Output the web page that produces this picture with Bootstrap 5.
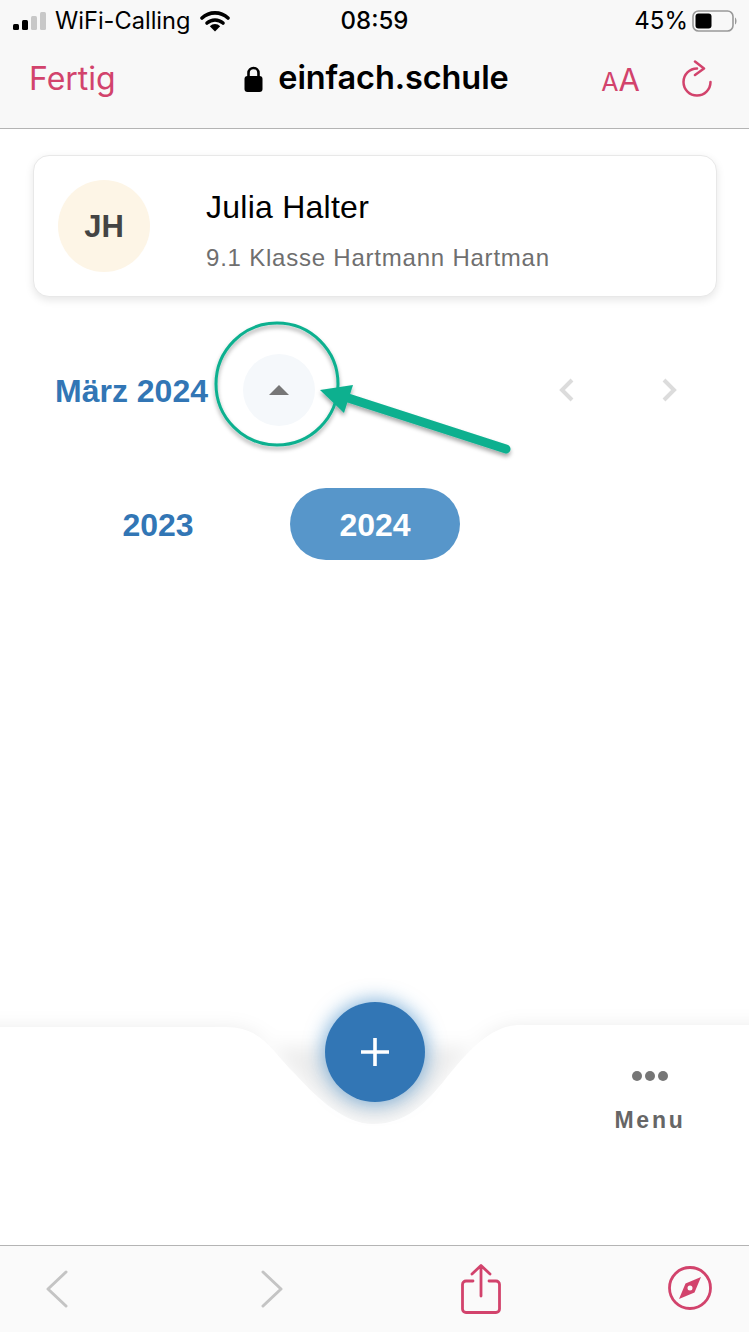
<!DOCTYPE html>
<html lang="de">
  <head>
    <meta charset="UTF-8" />
    <meta name="viewport" content="width=device-width, initial-scale=1.0" />
    <title>einfach.schule</title>
    <link href="https://cdn.jsdelivr.net/npm/bootstrap@5.3.0/dist/css/bootstrap.min.css" rel="stylesheet" />
    <style>
      html, body { height: 100%; }
      body { width: 749px; height: 1332px; overflow: hidden; background: #fff; font-family: "Liberation Sans", Arial, sans-serif; color: #000; }
      .app-shell { height: 1332px; position: relative; }
      .ios-font { font-family: Inter, "Liberation Sans", sans-serif; }
      .top-bar { height: 129px; background: #f8f8f8; border-bottom: 1px solid #b4b4b4; flex: none; }
      .status-row { height: 41px; padding: 1px 11px 0 13px; font-size: 23.6px; line-height: 1; position: relative; }
      .status-time { position: absolute; left: 0; right: 0; top: 9px; text-align: center; font-size: 24px; font-weight: 500; }
      .battery-text { font-size: 24px; }
      .wifi-mark { flex: none; margin-left: 9px; }
      .url-row { height: 87px; padding: 0 37px 12px 29px; display: grid; grid-template-columns: 1fr auto 1fr; align-items: center; }
      .done-link { color: #d2436c; font-size: 32px; text-decoration: none; }
      .site-box { margin-left: 12px; }
      .site-name { font-size: 32.5px; font-weight: 600; letter-spacing: -.1px; }
      .lock-mark { flex: none; margin-right: 15px; }
      .aa-small { color: #d2436c; font-size: 25px; line-height: 1; margin-top: 7px; }
      .aa-big { color: #d2436c; font-size: 31px; line-height: 1; margin-top: 1px; margin-right: 42px; }
      .main-area { flex: 1 1 auto; padding: 26px 32px 0 33px; }
      .person-card { height: 142px; border: 1px solid #e8e8e8; border-radius: 16px; padding: 0 24px; box-shadow: 0 3px 8px rgba(0, 0, 0, .1); }
      .avatar-ball { width: 92px; height: 92px; border-radius: 50%; background: #fdf5e6; color: #444; font-size: 31px; font-weight: 700; margin-right: 56px; padding-top: 3px; }
      .person-text { padding-top: 9px; }
      .person-name { font-size: 32px; line-height: 36px; letter-spacing: .25px; margin-bottom: 19px; }
      .person-class { font-size: 24px; line-height: 28px; letter-spacing: .78px; color: #6f6f6f; }
      .month-row { height: 72px; margin-top: 57px; padding-left: 22px; }
      .month-title { font-size: 32px; font-weight: 700; color: #3276b5; margin-right: 35px; padding-top: 2px; }
      .round-toggle { width: 72px; height: 72px; border-radius: 50%; border: 0; padding: 0; background: #f5f8fb; }
      .pager-box { margin-left: auto; width: 120px; margin-right: 39px; }
      .year-row { margin-top: 62px; padding-left: 40px; gap: 47px; }
      .year-pill { width: 170px; height: 72px; border-radius: 36px; border: 0; background: transparent; font-size: 32px; font-weight: 700; color: #3276b5; padding: 2px 0 0; }
      .year-pill.is-active { background: #5796ca; color: #fff; }
      .note-layer { position: absolute; left: 0; top: 0; pointer-events: none; }
      .tab-area { height: 245px; position: relative; flex: none; }
      .tab-curve { position: absolute; left: 0; top: 0; }
      .fab-btn { position: absolute; left: 325px; top: 2px; width: 100px; height: 100px; border-radius: 50%; border: 0; padding: 0; background: #3276b5; box-shadow: 0 0 18px 3px rgba(50, 130, 195, .55); }
      .menu-item { position: absolute; left: 600px; width: 100px; top: 71px; text-align: center; color: #666; font-size: 23px; font-weight: 700; letter-spacing: 2.8px; }
      .dot-row { gap: 3px; height: 10px; margin-bottom: 22px; }
      .dot-row span { width: 10px; height: 10px; border-radius: 50%; background: #767676; }
      .bottom-bar { height: 87px; flex: none; background: #fafafa; border-top: 1px solid #b4b4b4; position: relative; }
      .bottom-icons { height: 86px; padding: 0 37px 0 46px; }
      .fwd-icon { margin-left: 193px; }
      .share-icon { margin-left: 178px; }
      .compass-icon { margin-left: auto; margin-top: -2px; }
    </style>
  </head>
  <body>
    <div class="app-shell d-flex flex-column">
      <header class="top-bar">
        <div class="status-row d-flex align-items-center ios-font">
          <svg width="34" height="18" viewBox="0 0 34 18" class="me-2 flex-shrink-0">
            <rect x="0" y="12" width="6" height="6" rx="1.5" fill="#000" />
            <rect x="9" y="8" width="6" height="10" rx="1.5" fill="#000" />
            <rect x="18" y="4" width="6" height="14" rx="1.5" fill="#c8c8c8" />
            <rect x="27" y="0" width="6" height="18" rx="1.5" fill="#c8c8c8" />
          </svg>
          <span>WiFi-Calling</span>
          <svg width="30" height="22" viewBox="0 0 30 22" class="wifi-mark">
            <path d="M2 8 A19 19 0 0 1 28 8" fill="none" stroke="#000" stroke-width="3.6" stroke-linecap="round" />
            <path d="M7 13 A12 12 0 0 1 23 13" fill="none" stroke="#000" stroke-width="3.6" stroke-linecap="round" />
            <path d="M15 21.5 L9.8 16.2 A7.5 7.5 0 0 1 20.2 16.2 Z" fill="#000" />
          </svg>
          <span class="status-time">08:59</span>
          <span class="battery-text ms-auto me-1">45%</span>
          <svg width="46" height="22" viewBox="0 0 46 22" class="flex-shrink-0">
            <rect x="1" y="1" width="40" height="20" rx="5.5" fill="none" stroke="#999" stroke-width="1.6" />
            <rect x="3.5" y="3.5" width="16" height="15" rx="3" fill="#000" />
            <path d="M43 7.5 C45 8.5 45 13.5 43 14.5 Z" fill="#999" />
          </svg>
        </div>
        <div class="url-row ios-font">
          <a href="#" class="done-link">Fertig</a>
          <div class="site-box d-flex align-items-center">
            <svg width="19" height="26" viewBox="0 0 19 26" class="lock-mark">
              <path d="M4.5 11 V7 A5 5 0 0 1 14.5 7 V11" fill="none" stroke="#000" stroke-width="2.6" />
              <rect x="0.5" y="10" width="18" height="16" rx="3" fill="#000" />
            </svg>
            <span class="site-name">einfach.schule</span>
          </div>
          <div class="d-flex align-items-center justify-content-end">
            <span class="aa-small">A</span><span class="aa-big">A</span>
            <svg width="30" height="37" viewBox="0 0 30 37" fill="none" stroke="#d2436c" stroke-width="2.5" stroke-linecap="round" stroke-linejoin="round" class="flex-shrink-0">
              <path d="M15 8.5 A13.5 13.5 0 1 0 28.5 22" />
              <path d="M13 1.5 L22 8.5 L13 15" />
            </svg>
          </div>
        </div>
      </header>

      <main class="main-area">
        <div class="card person-card flex-row align-items-center">
          <div class="avatar-ball d-flex align-items-center justify-content-center flex-shrink-0">JH</div>
          <div class="person-text">
            <div class="person-name">Julia Halter</div>
            <div class="person-class">9.1 Klasse Hartmann Hartman</div>
          </div>
        </div>

        <div class="month-row d-flex align-items-center">
          <span class="month-title">März 2024</span>
          <button class="round-toggle d-flex align-items-center justify-content-center" aria-label="Jahr wählen">
            <svg width="20" height="10" viewBox="0 0 20 10"><path d="M10 0 L20 10 H0 Z" fill="#777" /></svg>
          </button>
          <div class="pager-box d-flex justify-content-between">
            <svg width="16" height="24" viewBox="0 0 16 24" fill="none" stroke="#dcdcdc" stroke-width="4"><path d="M14 2 L4 12 L14 22" /></svg>
            <svg width="16" height="24" viewBox="0 0 16 24" fill="none" stroke="#dcdcdc" stroke-width="4"><path d="M2 2 L12 12 L2 22" /></svg>
          </div>
        </div>

        <div class="year-row d-flex">
          <button class="year-pill">2023</button>
          <button class="year-pill is-active">2024</button>
        </div>
      </main>

      <section class="tab-area">
        <svg class="tab-curve" width="749" height="245" viewBox="0 0 749 245">
          <defs>
            <filter id="curveShade" x="-5%" y="-30%" width="110%" height="160%">
              <feGaussianBlur stdDeviation="9" />
            </filter>
          </defs>
          <path d="M-20 27 H225 C262 27 270 49 296 75 C318 99 345 124 373 124 C405 124 425 105 447 77 C470 49 492 25 520 25 H769 V47 H-20 Z" fill="#000" fill-opacity=".07" filter="url(#curveShade)" />
          <path d="M-20 27 H225 C262 27 270 49 296 75 C318 99 345 124 373 124 C405 124 425 105 447 77 C470 49 492 25 520 25 H769 V245 H-20 Z" fill="#fff" />
        </svg>
        <button class="fab-btn d-flex align-items-center justify-content-center" aria-label="Neu">
          <svg width="28" height="28" viewBox="0 0 28 28"><path d="M14 0 V28 M0 14 H28" stroke="#fff" stroke-width="3.6" /></svg>
        </button>
        <div class="menu-item">
          <div class="dot-row d-flex justify-content-center"><span></span><span></span><span></span></div>
          Menu
        </div>
      </section>

      <footer class="bottom-bar">
        <div class="bottom-icons d-flex align-items-center">
          <svg width="22" height="38" viewBox="0 0 22 38" fill="none" stroke="#c4c4c4" stroke-width="3" stroke-linecap="round" stroke-linejoin="round"><path d="M20 2 L2 19 L20 36" /></svg>
          <svg width="22" height="38" viewBox="0 0 22 38" fill="none" stroke="#c4c4c4" stroke-width="3" stroke-linecap="round" stroke-linejoin="round" class="fwd-icon"><path d="M2 2 L20 19 L2 36" /></svg>
          <svg width="40" height="50" viewBox="0 0 40 50" fill="none" stroke="#d2436c" stroke-width="2.8" stroke-linecap="round" stroke-linejoin="round" class="share-icon"><path d="M20 32 V2 M11 10 L20 1.5 L29 10" /><path d="M12 17 H5 A3.5 3.5 0 0 0 1.5 20.5 V45 A3.5 3.5 0 0 0 5 48.5 H35 A3.5 3.5 0 0 0 38.5 45 V20.5 A3.5 3.5 0 0 0 35 17 H28" /></svg>
          <svg width="44" height="44" viewBox="0 0 44 44" class="compass-icon"><circle cx="22" cy="22" r="20.5" fill="none" stroke="#d2436c" stroke-width="2.8" /><path fill-rule="evenodd" d="M33 11 L26.5 26.5 L11 33 L17.5 17.5 Z M22 19.5 A2.5 2.5 0 1 0 22 24.5 A2.5 2.5 0 1 0 22 19.5 Z" fill="#d2436c" /></svg>
        </div>
      </footer>

      <svg class="note-layer" width="749" height="600" viewBox="0 0 749 600">
        <defs>
          <filter id="noteShade" x="-20%" y="-20%" width="140%" height="140%">
            <feDropShadow dx="0" dy="3" stdDeviation="2" flood-color="#000" flood-opacity=".35" />
          </filter>
        </defs>
        <g filter="url(#noteShade)">
          <circle cx="277" cy="384" r="61" fill="none" stroke="#0bb08f" stroke-width="3" />
          <path d="M345 397 L506 449" stroke="#0bb08f" stroke-width="9" stroke-linecap="round" />
          <path d="M320 390 L353 385 L344 413 Z" fill="#0bb08f" />
        </g>
      </svg>
    </div>
    <script src="https://cdn.jsdelivr.net/npm/bootstrap@5.3.0/dist/js/bootstrap.bundle.min.js"></script>
  </body>
</html>
